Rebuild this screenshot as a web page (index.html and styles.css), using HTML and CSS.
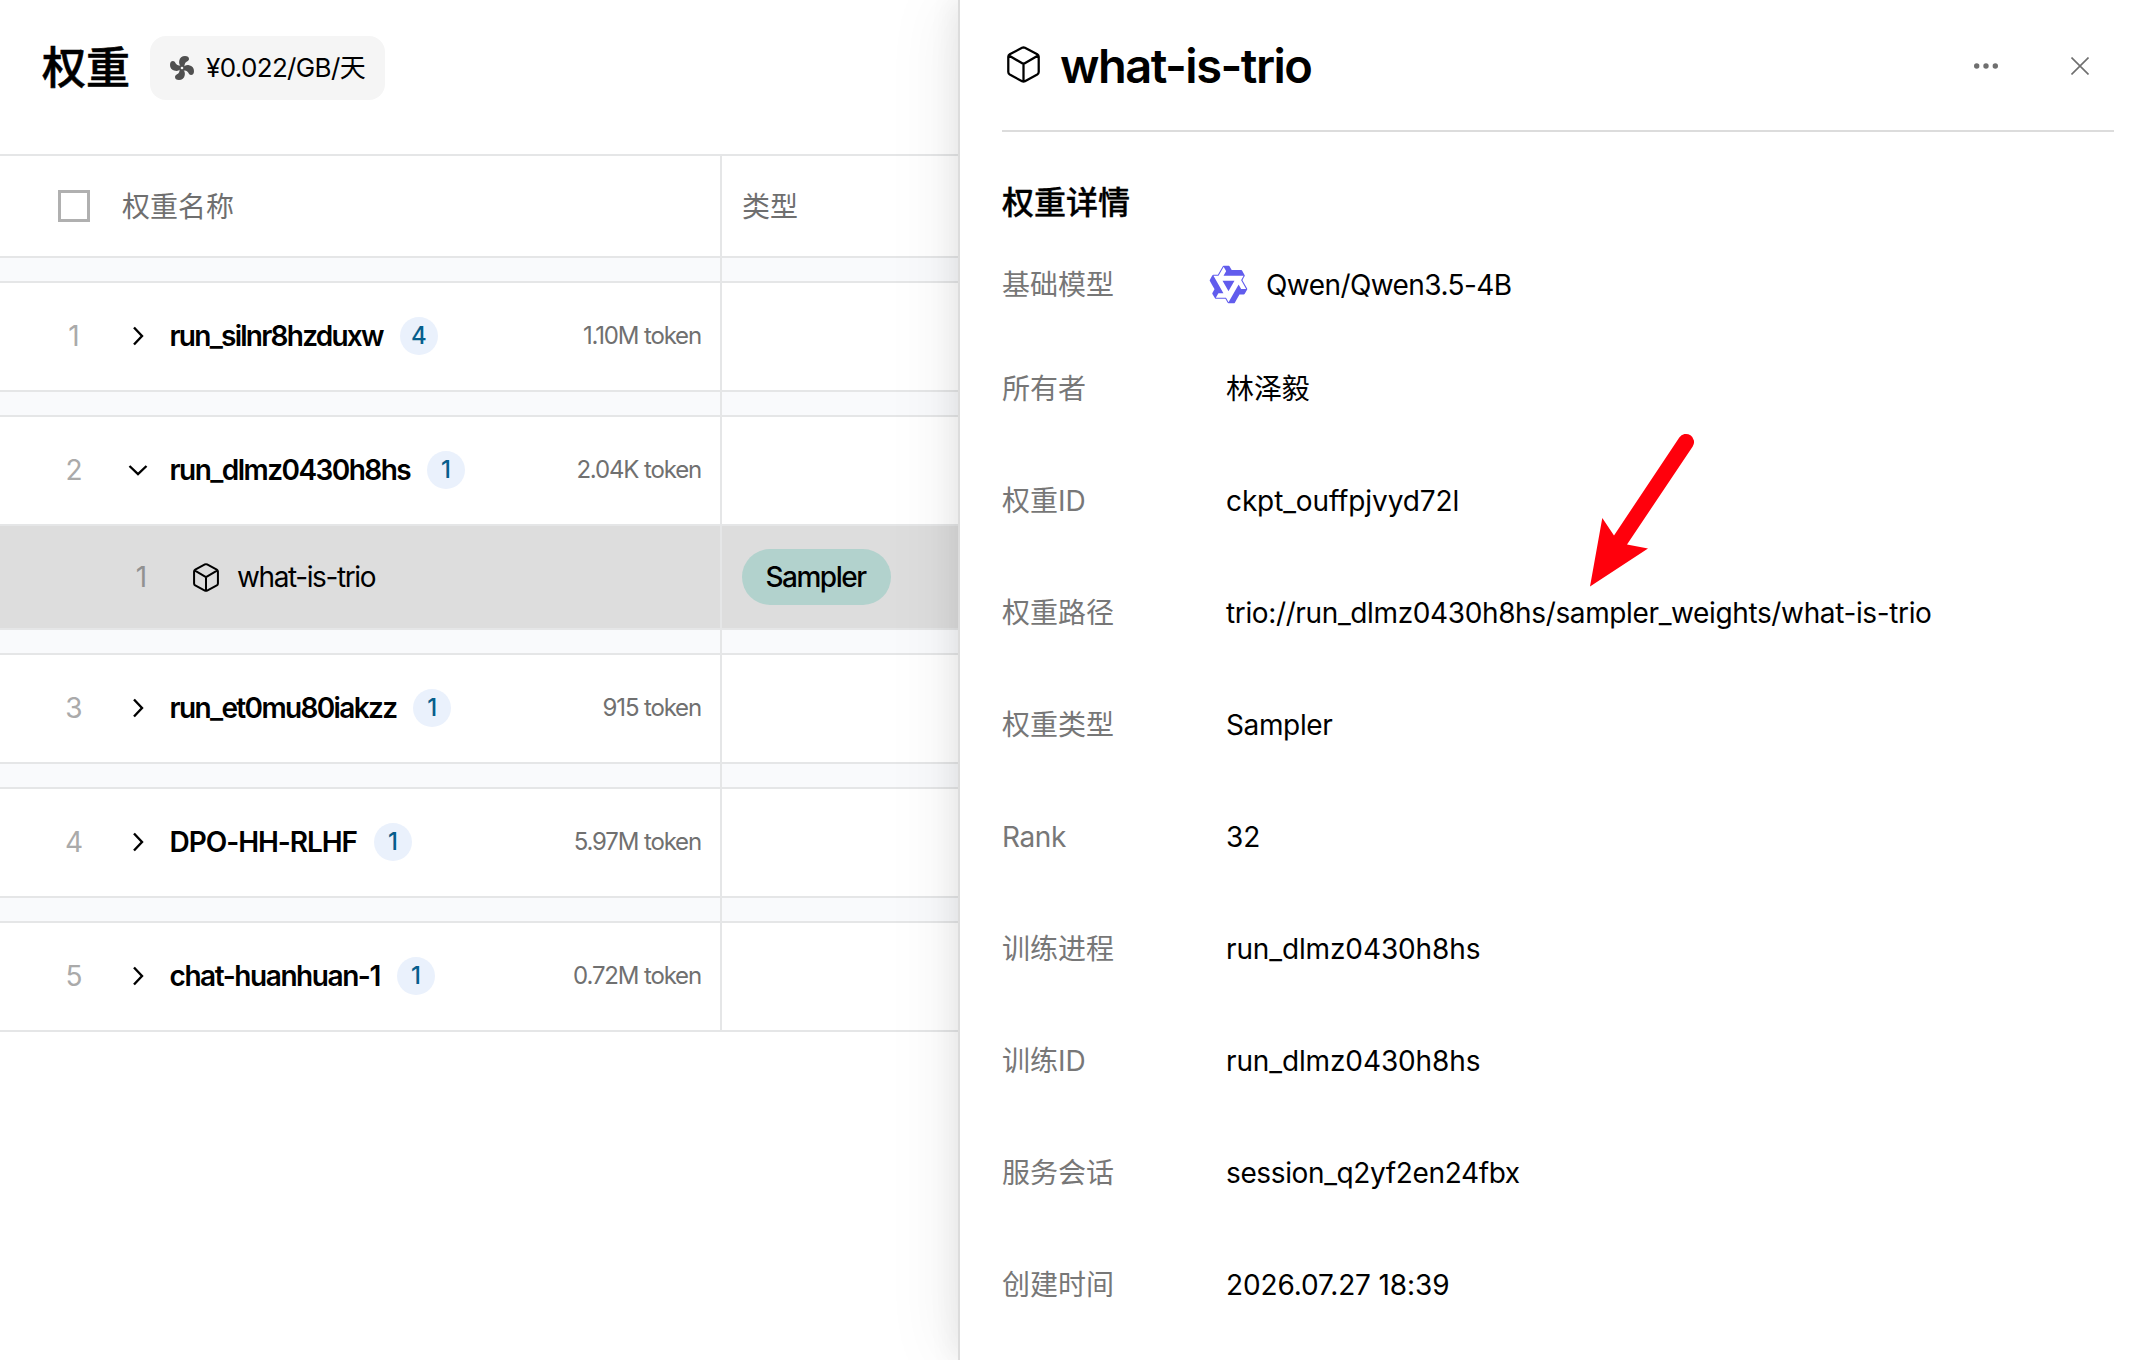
FILE: index.html
```html
<!DOCTYPE html>
<html lang="zh-CN">
<head>
<meta charset="utf-8">
<title>权重</title>
<link rel="stylesheet" href="styles.css">
</head>
<body>
<svg class="defs" width="0" height="0">
  <symbol id="cube" viewBox="0 0 32 36"><path d="M14.6 1.8 2.6 8.1Q1.2 8.9 1.2 10.5V25.4Q1.2 27 2.6 27.8L14.6 34.2Q16 34.9 17.4 34.2L29.4 27.8Q30.8 27 30.8 25.4V10.5Q30.8 8.9 29.4 8.1L17.4 1.8Q16 1.1 14.6 1.8ZM1.8 9.2 16 17.6 30.2 9.2M16 17.6V34.5"/></symbol>
  <symbol id="right" viewBox="0 0 20 20"><path d="M6 1.5 14 10 6 18.5"/></symbol>
  <symbol id="down" viewBox="0 0 20 20"><path d="M1.5 6 10 14 18.5 6"/></symbol>
</svg>
<div class="app">
  <main class="list">
    <header class="list-head">
      <h1>权重</h1>
      <div class="chip">
        <svg class="fan" viewBox="0 0 24 24"><path id="blade" d="M11.600 11C9.800 9.800 8.800 7.800 9.200 5 9.700 1.600 12 0 15 0 17.600 0 19 1 19 3 19 5.200 15.800 5.600 15 7.400 14.600 8.400 14.600 9.300 14.200 10.800Z"/><use href="#blade" transform="rotate(90 12 12)"/><use href="#blade" transform="rotate(180 12 12)"/><use href="#blade" transform="rotate(270 12 12)"/><circle cx="12" cy="12" r="2.600"/><circle class="hub" cx="12" cy="12" r="1.300"/></svg>
        <span>¥0.022/GB/天</span>
      </div>
    </header>
    <div class="row head"><div class="cell name"><i class="check"></i><span>权重名称</span></div><div class="cell">类型</div></div>
    <div class="row gap"><div class="cell"></div><div class="cell"></div></div>
    <div class="row"><div class="cell name"><b class="idx">1</b><svg class="chev"><use href="#right"/></svg><span class="run r1">run_silnr8hzduxw</span><em class="count">4</em><span class="tok">1.10M token</span></div><div class="cell"></div></div>
    <div class="row gap"><div class="cell"></div><div class="cell"></div></div>
    <div class="row"><div class="cell name"><b class="idx">2</b><svg class="chev"><use href="#down"/></svg><span class="run r2">run_dlmz0430h8hs</span><em class="count">1</em><span class="tok">2.04K token</span></div><div class="cell"></div></div>
    <div class="row selected"><div class="cell name"><b class="idx">1</b><svg class="box"><use href="#cube"/></svg><span class="child">what-is-trio</span></div><div class="cell"><span class="tag">Sampler</span></div></div>
    <div class="row gap"><div class="cell"></div><div class="cell"></div></div>
    <div class="row"><div class="cell name"><b class="idx">3</b><svg class="chev"><use href="#right"/></svg><span class="run r3">run_et0mu80iakzz</span><em class="count">1</em><span class="tok">915 token</span></div><div class="cell"></div></div>
    <div class="row gap"><div class="cell"></div><div class="cell"></div></div>
    <div class="row"><div class="cell name"><b class="idx">4</b><svg class="chev"><use href="#right"/></svg><span class="run r4">DPO-HH-RLHF</span><em class="count">1</em><span class="tok">5.97M token</span></div><div class="cell"></div></div>
    <div class="row gap"><div class="cell"></div><div class="cell"></div></div>
    <div class="row"><div class="cell name"><b class="idx">5</b><svg class="chev"><use href="#right"/></svg><span class="run r5">chat-huanhuan-1</span><em class="count">1</em><span class="tok">0.72M token</span></div><div class="cell"></div></div>
  </main>
  <aside class="drawer">
    <header class="drawer-head">
      <svg class="box big"><use href="#cube"/></svg>
      <h2>what-is-trio</h2>
      <svg class="more" viewBox="0 0 24 6"><circle cx="2.700" cy="3" r="2.700"/><circle cx="12" cy="3" r="2.700"/><circle cx="21.300" cy="3" r="2.700"/></svg>
      <svg class="close" viewBox="0 0 18 18"><path d="M.5.5 17.500 17.500M17.500.5.5 17.500"/></svg>
    </header>
    <h3>权重详情</h3>
    <dl>
      <div class="model"><dt>基础模型</dt><dd><svg class="qwen" viewBox="0 0 24 24"><path d="M12.604 1.34c.393.69.784 1.382 1.174 2.075a.18.18 0 00.157.091h5.552c.174 0 .322.11.446.327l1.454 2.57c.19.337.24.478.024.837-.26.43-.513.864-.76 1.3l-.367.658c-.106.196-.223.28-.04.512l2.652 4.637c.172.301.111.494-.043.77-.437.785-.882 1.564-1.335 2.34-.159.272-.352.375-.68.37-.777-.016-1.552-.01-2.327.016a.099.099 0 00-.081.05 575.097 575.097 0 01-2.705 4.74c-.169.293-.38.363-.725.364-.997.003-2.002.004-3.017.002a.537.537 0 01-.465-.271l-1.335-2.323a.09.09 0 00-.083-.049H4.982c-.285.03-.553-.001-.805-.092l-1.603-2.77a.543.543 0 01-.002-.54l1.207-2.12a.198.198 0 000-.197 550.951 550.951 0 01-1.875-3.272l-.79-1.395c-.16-.31-.173-.496.095-.965.465-.813.927-1.625 1.387-2.436.132-.234.304-.334.584-.335a338.3 338.3 0 012.589-.001.124.124 0 00.107-.063l2.806-4.895a.488.488 0 01.422-.246c.524-.001 1.053 0 1.583-.006L11.704 1c.341-.003.724.032.9.34zm-3.432.403a.06.06 0 00-.052.03L6.254 6.788a.157.157 0 01-.135.078H3.253c-.056 0-.07.025-.041.074l5.81 10.156c.025.042.013.062-.034.063l-2.795.015a.218.218 0 00-.2.116l-1.32 2.31c-.044.078-.021.118.068.118l5.716.008c.046 0 .08.02.104.061l1.403 2.454c.046.081.092.082.139 0l5.006-8.76.783-1.382a.055.055 0 01.096 0l1.424 2.53a.122.122 0 00.107.062l2.763-.02a.04.04 0 00.035-.02.041.041 0 000-.04l-2.9-5.086a.108.108 0 010-.113l.293-.507 1.12-1.977c.024-.041.012-.062-.035-.062H9.2c-.059 0-.073-.026-.043-.077l1.434-2.505a.107.107 0 000-.114L9.225 1.774a.06.06 0 00-.053-.031zm6.29 8.02c.046 0 .058.02.034.06l-.832 1.465-2.613 4.585a.056.056 0 01-.05.029.058.058 0 01-.05-.029L8.498 9.841c-.02-.034-.01-.052.028-.054l.216-.012 6.722-.012z"/></svg><span class="model-name">Qwen/Qwen3.5-4B</span></dd></div>
      <div><dt>所有者</dt><dd>林泽毅</dd></div>
      <div><dt>权重ID</dt><dd>ckpt_ouffpjvyd72l</dd></div>
      <div><dt>权重路径</dt><dd class="tight">trio://run_dlmz0430h8hs/sampler_weights/what-is-trio</dd></div>
      <div><dt>权重类型</dt><dd class="tight">Sampler</dd></div>
      <div><dt class="tight">Rank</dt><dd>32</dd></div>
      <div><dt>训练进程</dt><dd>run_dlmz0430h8hs</dd></div>
      <div><dt>训练ID</dt><dd>run_dlmz0430h8hs</dd></div>
      <div><dt>服务会话</dt><dd class="tight">session_q2yf2en24fbx</dd></div>
      <div><dt>创建时间</dt><dd>2026.07.27 18:39</dd></div>
    </dl>
  </aside>
  <svg class="arrow" viewBox="0 0 110 160"><path d="M5 156.500 17.300 88 29 105.500 94.300 7.500A8 8 0 0 1 107.700 16.500L42 114.500 63 118.500Z" /></svg>
</div>
</body>
</html>
```
FILE: styles.css
```css
* { box-sizing: border-box; }
body {
  margin: 0;
  background: #fff;
  color: #000;
  font: 28px/40px Inter, "Noto Sans CJK SC", sans-serif;
}
h1, h2, h3, dl, dd { margin: 0; }
.defs { position: absolute; }
.app {
  display: flex;
  position: relative;
  width: 2148px;
  height: 1360px;
  overflow: hidden;
}

.list { width: 958px; flex: none; }
.list-head {
  display: flex;
  align-items: center;
  gap: 20px;
  height: 156px;
  padding: 0 0 18px 42px;
  border-bottom: 2px solid #e5e6e7;
}
h1 { font-size: 44px; line-height: 64px; font-weight: 500; -webkit-text-stroke: .6px #000; }
.chip {
  display: flex;
  align-items: center;
  gap: 12px;
  width: 235px;
  height: 64px;
  padding-left: 20px;
  border-radius: 16px;
  background: #f5f5f5;
  font-size: 26px;
  letter-spacing: -.65px;
}
.fan { width: 24px; height: 24px; fill: #505050; }
.fan .hub { fill: #f5f5f5; }

.row {
  display: grid;
  grid-template-columns: 722px 1fr;
  height: 109px;
  border-bottom: 2px solid #e5e6e7;
}
.row.head { height: 102px; color: #6f6f6f; line-height: 42px; }
.row.gap { height: 25px; background: #f9fafc; }
.row.selected { height: 104px; background: #ddd; }
.cell { display: flex; align-items: center; padding-left: 20px; }
.cell:first-child { padding: 0 19px 0 0; border-right: 2px solid #e5e6e7; }
.row:not(.head):not(.selected) > .cell { padding-bottom: 1px; }
.head span, .head .cell:last-child { padding-top: 1px; }
.check {
  width: 32px;
  height: 32px;
  margin: 0 32px 0 58px;
  border: 3px solid #b0b0b0;
}
.idx { width: 148px; flex: none; text-align: center; font-weight: 400; color: #aaa; }
.chev {
  width: 20px;
  height: 20px;
  margin: 0 21.5px 0 -20px;
  fill: none;
  stroke: #000;
  stroke-width: 2.4;
}
.run { font-weight: 600; letter-spacing: -1.55px; }
.r1 { letter-spacing: -1.75px; }
.r3 { letter-spacing: -1.65px; }
.r4 { letter-spacing: -1.05px; }
.r5 { letter-spacing: -1.43px; }
.count {
  width: 38px;
  height: 38px;
  margin-left: 17px;
  border-radius: 19px;
  background: #eaf1fc;
  color: #065e8c;
  font: 500 24px/38px Inter, sans-serif;
  text-align: center;
}
.tok { margin-left: auto; font-size: 24px; letter-spacing: -1.15px; color: #707070; }
.box { width: 26px; height: 29px; fill: none; stroke: #000; stroke-width: 2.5; stroke-linejoin: round; }
.selected .idx { width: 193px; padding-left: 90px; color: #919191; }
.child { margin-left: 18px; letter-spacing: -1.4px; }
.tag {
  width: 149px;
  height: 56px;
  padding-right: 2px;
  border-radius: 28px;
  background: #b2d2cd;
  font-weight: 550;
  line-height: 56px;
  letter-spacing: -1.5px;
  text-align: center;
}

.drawer {
  position: relative;
  flex: 1;
  padding: 0 34px 0 42px;
  border-left: 2px solid #dcdcdc;
  background: #fff;
  box-shadow: -12px 0 64px rgba(0, 0, 0, .06), -6px 0 24px rgba(0, 0, 0, .06);
}
.drawer-head {
  display: flex;
  align-items: center;
  height: 132px;
  padding: 1px 25px 0 5px;
  border-bottom: 2px solid #dcdcdc;
}
.box.big { width: 33px; height: 37px; margin-bottom: 3px; stroke-width: 2.2; }
h2 { margin: 0 0 1px 20px; font-size: 47px; line-height: 63px; font-weight: 600; letter-spacing: -1.5px; }
.more { width: 24px; height: 6px; margin-left: auto; fill: #6f6f6f; }
.close { width: 18px; height: 18px; margin-left: 73px; stroke: #6f6f6f; stroke-width: 1.6; }
h3 { margin-top: 51px; font-size: 32px; line-height: 40px; font-weight: 500; -webkit-text-stroke: .3px #000; }
dl > div { display: flex; align-items: center; height: 112px; }
dl > .model { height: 96px; margin-top: 13.5px; }
dt { width: 224px; flex: none; color: #777; }
dd { display: flex; align-items: center; letter-spacing: -.12px; }
.tight { letter-spacing: -.37px; }
.model-name { letter-spacing: -.57px; }
.qwen { width: 41px; height: 41px; margin: 0 17px 0 -18px; fill: #615ced; }

.arrow { position: absolute; left: 1585px; top: 430px; width: 110px; height: 160px; fill: #ff000c; }
```
